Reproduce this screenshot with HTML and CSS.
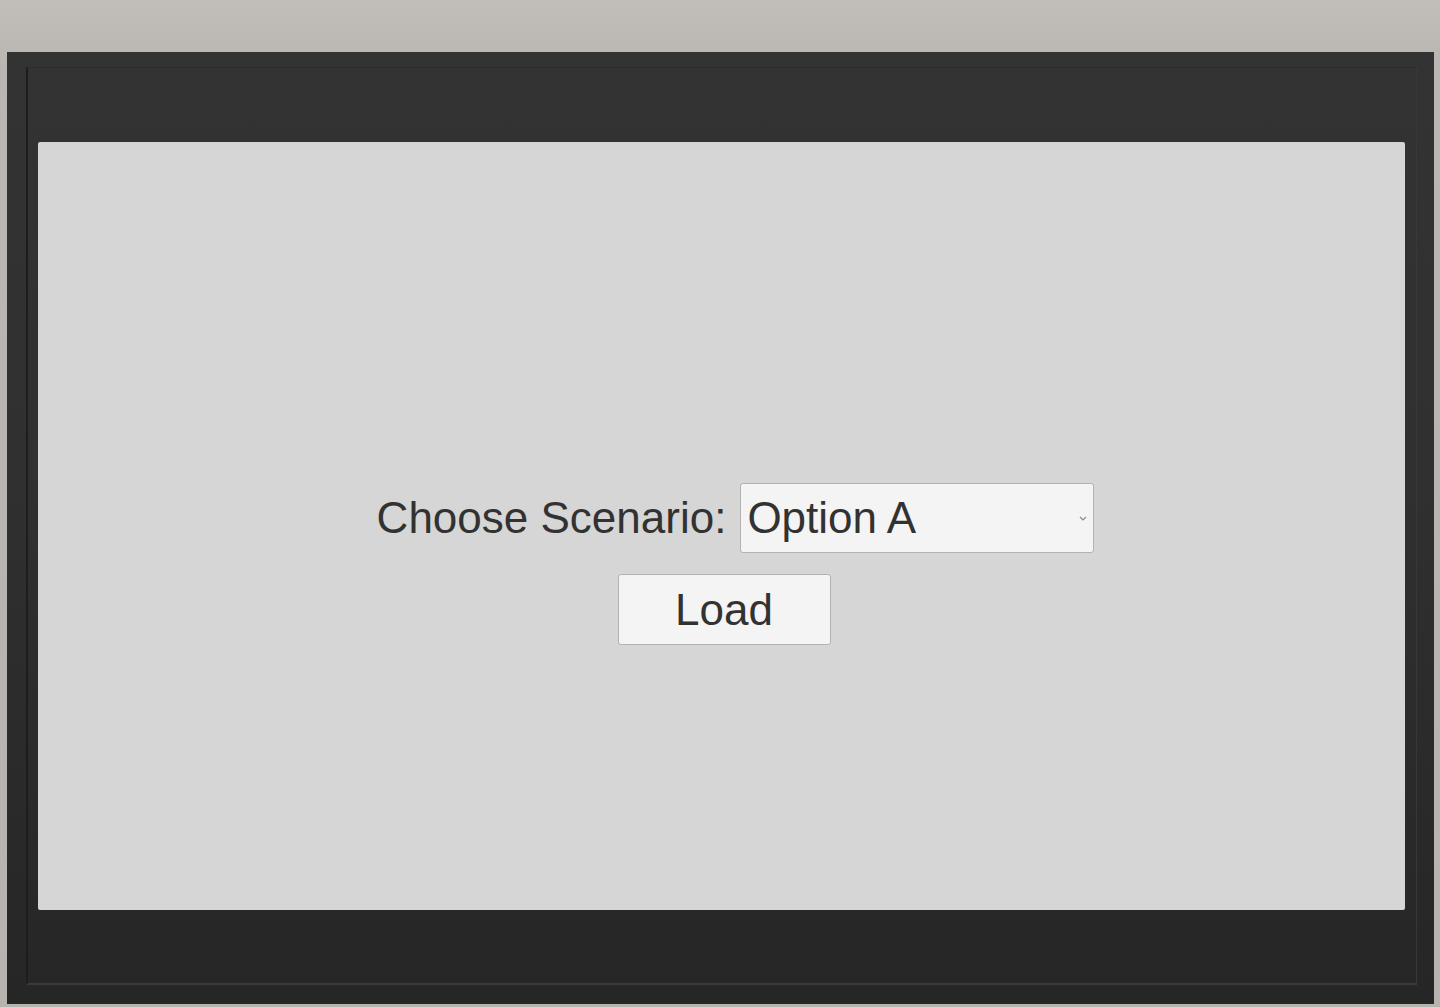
FILE: index.html
```html
<!DOCTYPE html>
<html lang="en">
<head>
<meta charset="utf-8">
<title>Choose Scenario</title>
<link rel="stylesheet" href="styles.css">
</head>
<body>
  <div class="monitor">
    <div class="bezel">
      <div class="screen">
        <div class="row">
          <span class="label">Choose Scenario:</span>
          <div class="select" role="combobox" aria-expanded="false">
            <span class="select-value">Option A</span>
            <svg class="chevron" width="8" height="5" viewBox="0 0 8 5"><path d="M1 1 L4 4 L7 1" fill="none" stroke="#8a8a8a" stroke-width="1.2"/></svg>
          </div>
        </div>
        <div class="actions">
          <button class="load">Load</button>
        </div>
      </div>
    </div>
  </div>
</body>
</html>
```
FILE: styles.css
```css
html, body {
  margin: 0;
  height: 100%;
}
body {
  background: linear-gradient(180deg, #c1beba 0%, #bab7b3 6%, #b7b4b0 100%);
  padding: 52px 6px 0 7px;
  box-sizing: border-box;
  overflow: hidden;
  font-family: "Liberation Sans", Arial, sans-serif;
}
.monitor {
  width: 1427px;
  height: 952px;
  box-sizing: border-box;
  background: linear-gradient(180deg, #333333 0%, #303030 45%, #262626 100%);
  padding: 15px 17px 19px 19px;
}
.bezel {
  height: 100%;
  box-sizing: border-box;
  border-left: 2px solid #1d1d1d;
  border-top: 1px solid #2e2e2e;
  border-right: 1px solid #383838;
  border-bottom: 2px solid #3b3b3b;
  padding: 74px 11px 73px 10px;
}
.screen {
  height: 100%;
  box-sizing: border-box;
  background: #d6d6d6;
  border-radius: 2px;
  padding-top: 341px;
  display: flex;
  flex-direction: column;
  align-items: center;
}
.row {
  display: flex;
  align-items: center;
  gap: 14px;
  padding-left: 28px;
}
.label {
  font-size: 44px;
  color: #323232;
  line-height: 1;
}
.select {
  position: relative;
  width: 354px;
  height: 70px;
  box-sizing: border-box;
  background: #f4f4f4;
  border: 1px solid #b2b2b2;
  border-radius: 3px;
  display: flex;
  align-items: center;
  padding-left: 6px;
}
.select-value {
  font-size: 44px;
  color: #323232;
  line-height: 1;
}
.chevron {
  position: absolute;
  right: 6px;
  top: 32px;
}
.actions {
  margin-top: 21px;
  padding-left: 5px;
}
.load {
  width: 213px;
  height: 71px;
  box-sizing: border-box;
  background: #f4f4f4;
  border: 1px solid #b2b2b2;
  border-radius: 3px;
  font-family: "Liberation Sans", Arial, sans-serif;
  font-size: 44px;
  color: #323232;
  padding: 0;
  line-height: 1;
}
```
